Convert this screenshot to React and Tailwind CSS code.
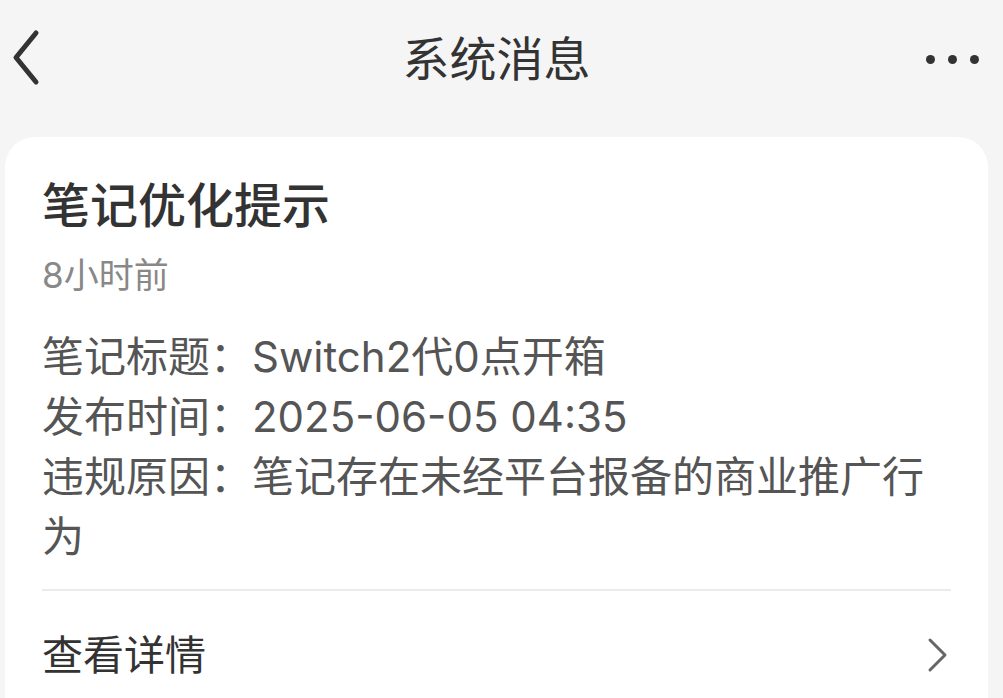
export default function App() {
  const font = { fontFamily: 'Inter, "Noto Sans CJK SC", "Noto Sans", sans-serif' };
  return (
    <div className="w-[1003px] h-[698px] overflow-hidden bg-[#f5f5f5]" style={font}>
      <div className="h-[124px] flex items-center justify-between px-[10px] relative">
        <svg width="32" height="60" viewBox="0 0 32 60" className="ml-[2px] mb-[6px]">
          <path d="M24 4 L4 28.5 L24 53" fill="none" stroke="#333" strokeWidth="5" strokeLinecap="round" strokeLinejoin="round" />
        </svg>
        <div className="absolute left-0 right-0 top-0 h-full flex items-center justify-center pointer-events-none">
          <span className="text-[47px] leading-none text-[#333] pb-[8px] mr-[10px]">系统消息</span>
        </div>
        <div className="flex items-center gap-[13px] mr-[14px] mb-[6px]">
          <span className="w-[9px] h-[9px] rounded-full bg-[#333]" />
          <span className="w-[9px] h-[9px] rounded-full bg-[#333]" />
          <span className="w-[9px] h-[9px] rounded-full bg-[#333]" />
        </div>
      </div>
      <div className="ml-[5px] mt-[13px] w-[983px] h-[600px] bg-white rounded-[30px] px-[37px] pt-[39px]">
        <div className="text-[48px] leading-[60px] font-medium text-[#333]">笔记优化提示</div>
        <div className="mt-[15px] text-[35px] leading-[48px] text-[#888]">8小时前</div>
        <div className="mt-[28px] text-[42px] leading-[60px] text-[#555]">
          <div>笔记标题：Switch2代0点开箱</div>
          <div>发布时间：2025-06-05 04:35</div>
          <div>违规原因：笔记存在未经平台报备的商业推广行为</div>
        </div>
        <div className="mt-[22px] h-[2px] bg-[#ebebeb]" />
        <div className="mt-[34px] flex items-center justify-between">
          <span className="text-[41px] leading-[60px] text-[#333]">查看详情</span>
          <svg width="22" height="36" viewBox="0 0 22 36" className="mr-[2px]">
            <path d="M3 3 L18 18 L3 33" fill="none" stroke="#666" strokeWidth="3" strokeLinecap="round" strokeLinejoin="round" />
          </svg>
        </div>
      </div>
    </div>
  );
}
